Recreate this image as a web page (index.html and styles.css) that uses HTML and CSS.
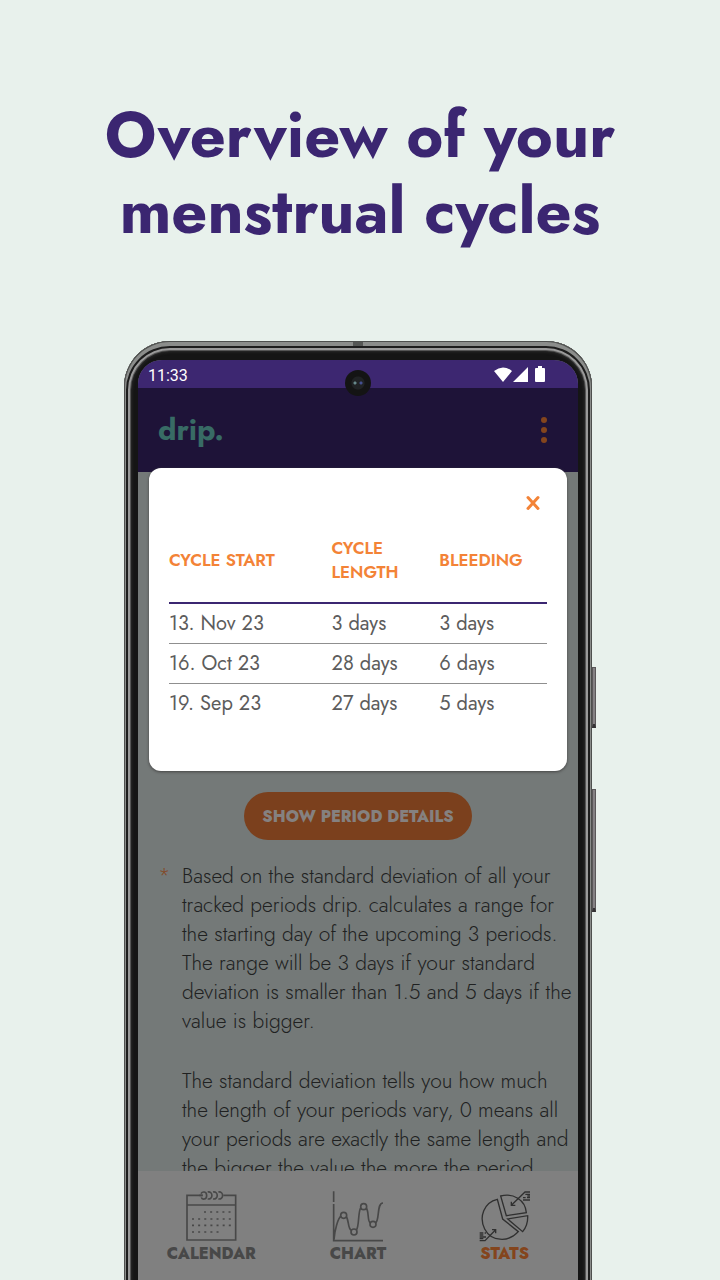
FILE: index.html
```html
<!DOCTYPE html>
<html lang="en">
<head>
<meta charset="utf-8">
<meta name="viewport" content="width=device-width, initial-scale=1">
<title>drip. – Overview of your menstrual cycles</title>
<link rel="stylesheet" href="styles.css">
</head>
<body>
<h1 class="headline">Overview of your<br>menstrual cycles</h1>
<main class="phone">
  <span class="side-key side-key-short"></span>
  <span class="side-key side-key-long"></span>
  <span class="antenna"></span>
  <div class="screen">
    <div class="status-bar">
      <span>11:33</span>
      <svg class="status-icons" viewBox="0 0 52 18" aria-hidden="true">
        <path d="M0 5 Q9 -2 18 5 L9 16Z M19 16 L34 1 V16Z M41 3 q0-1 1-1 h2 v-2 h4 v2 h2 q1 0 1 1 v12 q0 1 -1 1 h-8 q-1 0-1-1Z"/>
      </svg>
    </div>
    <span class="camera"></span>
    <header class="app-bar">
      <span class="logo">drip.</span>
      <button class="menu" type="button" aria-label="Menu"><i></i><i></i><i></i></button>
    </header>
    <section class="content">
      <button class="details" type="button">SHOW PERIOD DETAILS</button>
      <div class="note">
        <span class="asterisk">*</span>
        <div>
          <p>Based on the standard deviation of all your<br>tracked periods drip. calculates a range for<br>the starting day of the upcoming 3 periods.<br>The range will be 3 days if your standard<br>deviation is smaller than 1.5 and 5 days if the<br>value is bigger.</p>
          <p>The standard deviation tells you how much<br>the length of your periods vary, 0 means all<br>your periods are exactly the same length and<br>the bigger the value the more the period</p>
        </div>
      </div>
    </section>
    <nav class="tabs">
      <button class="tab" type="button">
        <svg class="tab-icon" viewBox="195 90 156 156" aria-hidden="true">
          <path d="M248 106H201V240H347V106H310M201 135H347"/>
          <path d="M238 106H248M243 101C247 94 260 93 260 107C260 119 246 120 244 112M263 96C280 93 280 119 263 117M279 96C296 93 296 119 279 117M295 96C312 93 312 119 295 117"/>
          <path class="dots" d="M252 156H335M216 177H335M216 196H335M216 216H298"/>
        </svg>
        CALENDAR
      </button>
      <button class="tab" type="button">
        <svg class="tab-icon" viewBox="156 90 156 156" aria-hidden="true">
          <path d="M161 94V126M161 132V242H309M162 238C164 210 174 174 183 169M199 170C207 180 203 207 214 211M229 211C238 199 234 154 242 144M258 144C268 151 261 184 271 189M286 189C300 182 289 129 309 129"/>
          <circle cx="191" cy="166" r="9"/><circle cx="222" cy="216" r="9"/><circle cx="251" cy="140" r="9"/><circle cx="279" cy="193" r="9"/>
        </svg>
        CHART
      </button>
      <button class="tab tab-active" type="button">
        <svg class="tab-icon" viewBox="117 90 156 156" aria-hidden="true">
          <path d="M172 118C132 127 116 171 134 207C153 244 204 249 235 215L188 177ZM182 108C219 98 256 119 259 158L199 167ZM203 177L263 167C264 185 260 201 248 215Z"/>
          <path d="M270 96H255L214 136M214 125V136H226M256 103H270M262 108H270M249 113H257M261 113H270M249 120H270M119 242H135L167 209M156 209H167V220M119 219H130M134 219H138M119 225H130M119 231H138M119 236H130"/>
        </svg>
        STATS
      </button>
    </nav>
    <section class="dialog" role="dialog" aria-label="Period details">
      <button class="close" type="button" aria-label="Close">
        <svg viewBox="0 0 14 16" aria-hidden="true"><path d="M2 2.500L12 13.500M12 2.500L2 13.500"/></svg>
      </button>
      <table class="cycles">
        <thead><tr><th class="start">CYCLE START</th><th>CYCLE<br>LENGTH</th><th>BLEEDING</th></tr></thead>
        <tbody>
          <tr><td>13. Nov 23</td><td>3 days</td><td>3 days</td></tr>
          <tr><td>16. Oct 23</td><td>28 days</td><td>6 days</td></tr>
          <tr><td>19. Sep 23</td><td>27 days</td><td>5 days</td></tr>
        </tbody>
      </table>
    </section>
  </div>
</main>
</body>
</html>
```
FILE: styles.css
```css
* { box-sizing: border-box; }
body {
  margin: 0;
  height: 100vh;
  display: flex;
  flex-direction: column;
  overflow: hidden;
  background: #e8f1ec;
  font-family: Jost, Lato, sans-serif;
}
button {
  margin: 0;
  padding: 0;
  border: 0;
  background: none;
  font: inherit;
  cursor: pointer;
}
.headline {
  margin: 0;
  padding: 98px 0 91px;
  color: #3b2671;
  font-size: 63px;
  line-height: 76px;
  font-weight: 700;
  text-align: center;
}
.phone {
  position: relative;
  flex: 1;
  min-height: 0;
  margin: 0 128px -16px 124px;
  padding: 19px 14px 16px;
  border-radius: 46px 46px 0 0;
  background: #151515;
  box-shadow:
    inset 0 0 0 1px #4e504e,
    inset 0 3px 0 2px #8b8d8b,
    inset 0 3px 0 4px #1d1d1d,
    inset 0 3px 0 6px #9a9a9a,
    inset 0 3px 0 7px #555555,
    inset 0 3px 3px 8px #2a2a2a;
}
.side-key {
  position: absolute;
  left: 100%;
  width: 4px;
  border: 1px solid #5b585a;
  border-bottom: 4px solid #353335;
  background: #858284;
}
.side-key-short { top: 326px; height: 61px; }
.side-key-long { top: 448px; height: 123px; }
.antenna {
  position: absolute;
  top: 1px;
  left: 50%;
  width: 10px;
  height: 4px;
  margin-left: -5px;
  background: #555755;
}
.screen {
  position: relative;
  height: 100%;
  display: flex;
  flex-direction: column;
  overflow: hidden;
  border-radius: 24px 24px 0 0;
  background: #747978;
}
.status-bar {
  flex: none;
  height: 28px;
  display: flex;
  align-items: center;
  justify-content: space-between;
  padding: 2px 32px 0 10px;
  background: #3d2771;
  color: #fff;
  font-family: Roboto, sans-serif;
  font-size: 16px;
}
.status-icons { width: 52px; height: 18px; fill: #fff; }
.camera {
  position: absolute;
  top: 10px;
  left: 50%;
  width: 26px;
  height: 26px;
  margin-left: -13px;
  border-radius: 50%;
  background:
    radial-gradient(circle at 10px 13px, #67898b 0 1px, transparent 2px),
    radial-gradient(circle at 16px 13px, #444f91 0 1px, transparent 2px),
    radial-gradient(circle, #202224 0 6px, #141414 7px);
}
.app-bar {
  flex: none;
  height: 84px;
  display: flex;
  align-items: center;
  justify-content: space-between;
  padding: 0 31px 0 20px;
  background: #1e1338;
}
.logo { color: #386b65; font-size: 30px; line-height: 40px; font-weight: 700; }
.menu { display: flex; flex-direction: column; gap: 4px; }
.menu i { width: 6px; height: 6px; border-radius: 50%; background: #84451d; }
.content {
  flex: 1;
  min-height: 0;
  overflow: hidden;
  padding-top: 320px;
  color: #202121;
}
.details {
  display: block;
  width: 228px;
  height: 48px;
  margin: 0 auto 22px;
  border-radius: 24px;
  background: #7b401d;
  color: #858180;
  font-size: 16px;
  font-weight: 800;
}
.note {
  display: grid;
  grid-template-columns: 24px 1fr;
  margin-left: 20px;
  font-size: 21px;
  line-height: 29px;
  font-weight: 300;
  white-space: nowrap;
}
.note p { margin: 0 0 31px; }
.asterisk { color: #84451d; }
.tabs {
  flex: none;
  display: grid;
  grid-template-columns: repeat(3, 1fr);
  height: 109px;
  background: #808080;
}
.tab {
  display: flex;
  flex-direction: column;
  align-items: center;
  padding-top: 19px;
  color: #484848;
  font-size: 16px;
  line-height: 24px;
  font-weight: 800;
}
.tab-icon {
  width: 52px;
  height: 52px;
  fill: none;
  stroke: #484848;
  stroke-width: 5;
}
.tab-icon .dots { stroke-dasharray: 6 12.400; }
.tab-active { color: #84451d; }
.tab-active .tab-icon { stroke: #303030; stroke-width: 4; }
.dialog {
  position: absolute;
  top: 108px;
  left: 11px;
  right: 11px;
  padding: 20px 20px 48px;
  border-radius: 12px;
  background: #fff;
  box-shadow: 0 1px 3px #444;
}
.close {
  display: flex;
  align-items: center;
  height: 30px;
  margin: 0 7px 18px auto;
}
.close svg {
  width: 14px;
  height: 16px;
  fill: none;
  stroke: #f38337;
  stroke-width: 3;
  stroke-linecap: round;
}
.cycles {
  width: 100%;
  table-layout: fixed;
  border-spacing: 0;
  text-align: left;
}
.cycles .start { width: 43%; }
.cycles th {
  padding: 0 0 18px;
  border-bottom: 2px solid #3b2671;
  color: #f38337;
  font-size: 17px;
  line-height: 24px;
  font-weight: 600;
}
.cycles td {
  height: 40px;
  padding: 0;
  border-bottom: 1px solid #8f8f8f;
  color: #5c5c5c;
  font-size: 20px;
  line-height: 24px;
}
.cycles tbody tr:last-child td { height: 39px; border-bottom: 0; }
```
